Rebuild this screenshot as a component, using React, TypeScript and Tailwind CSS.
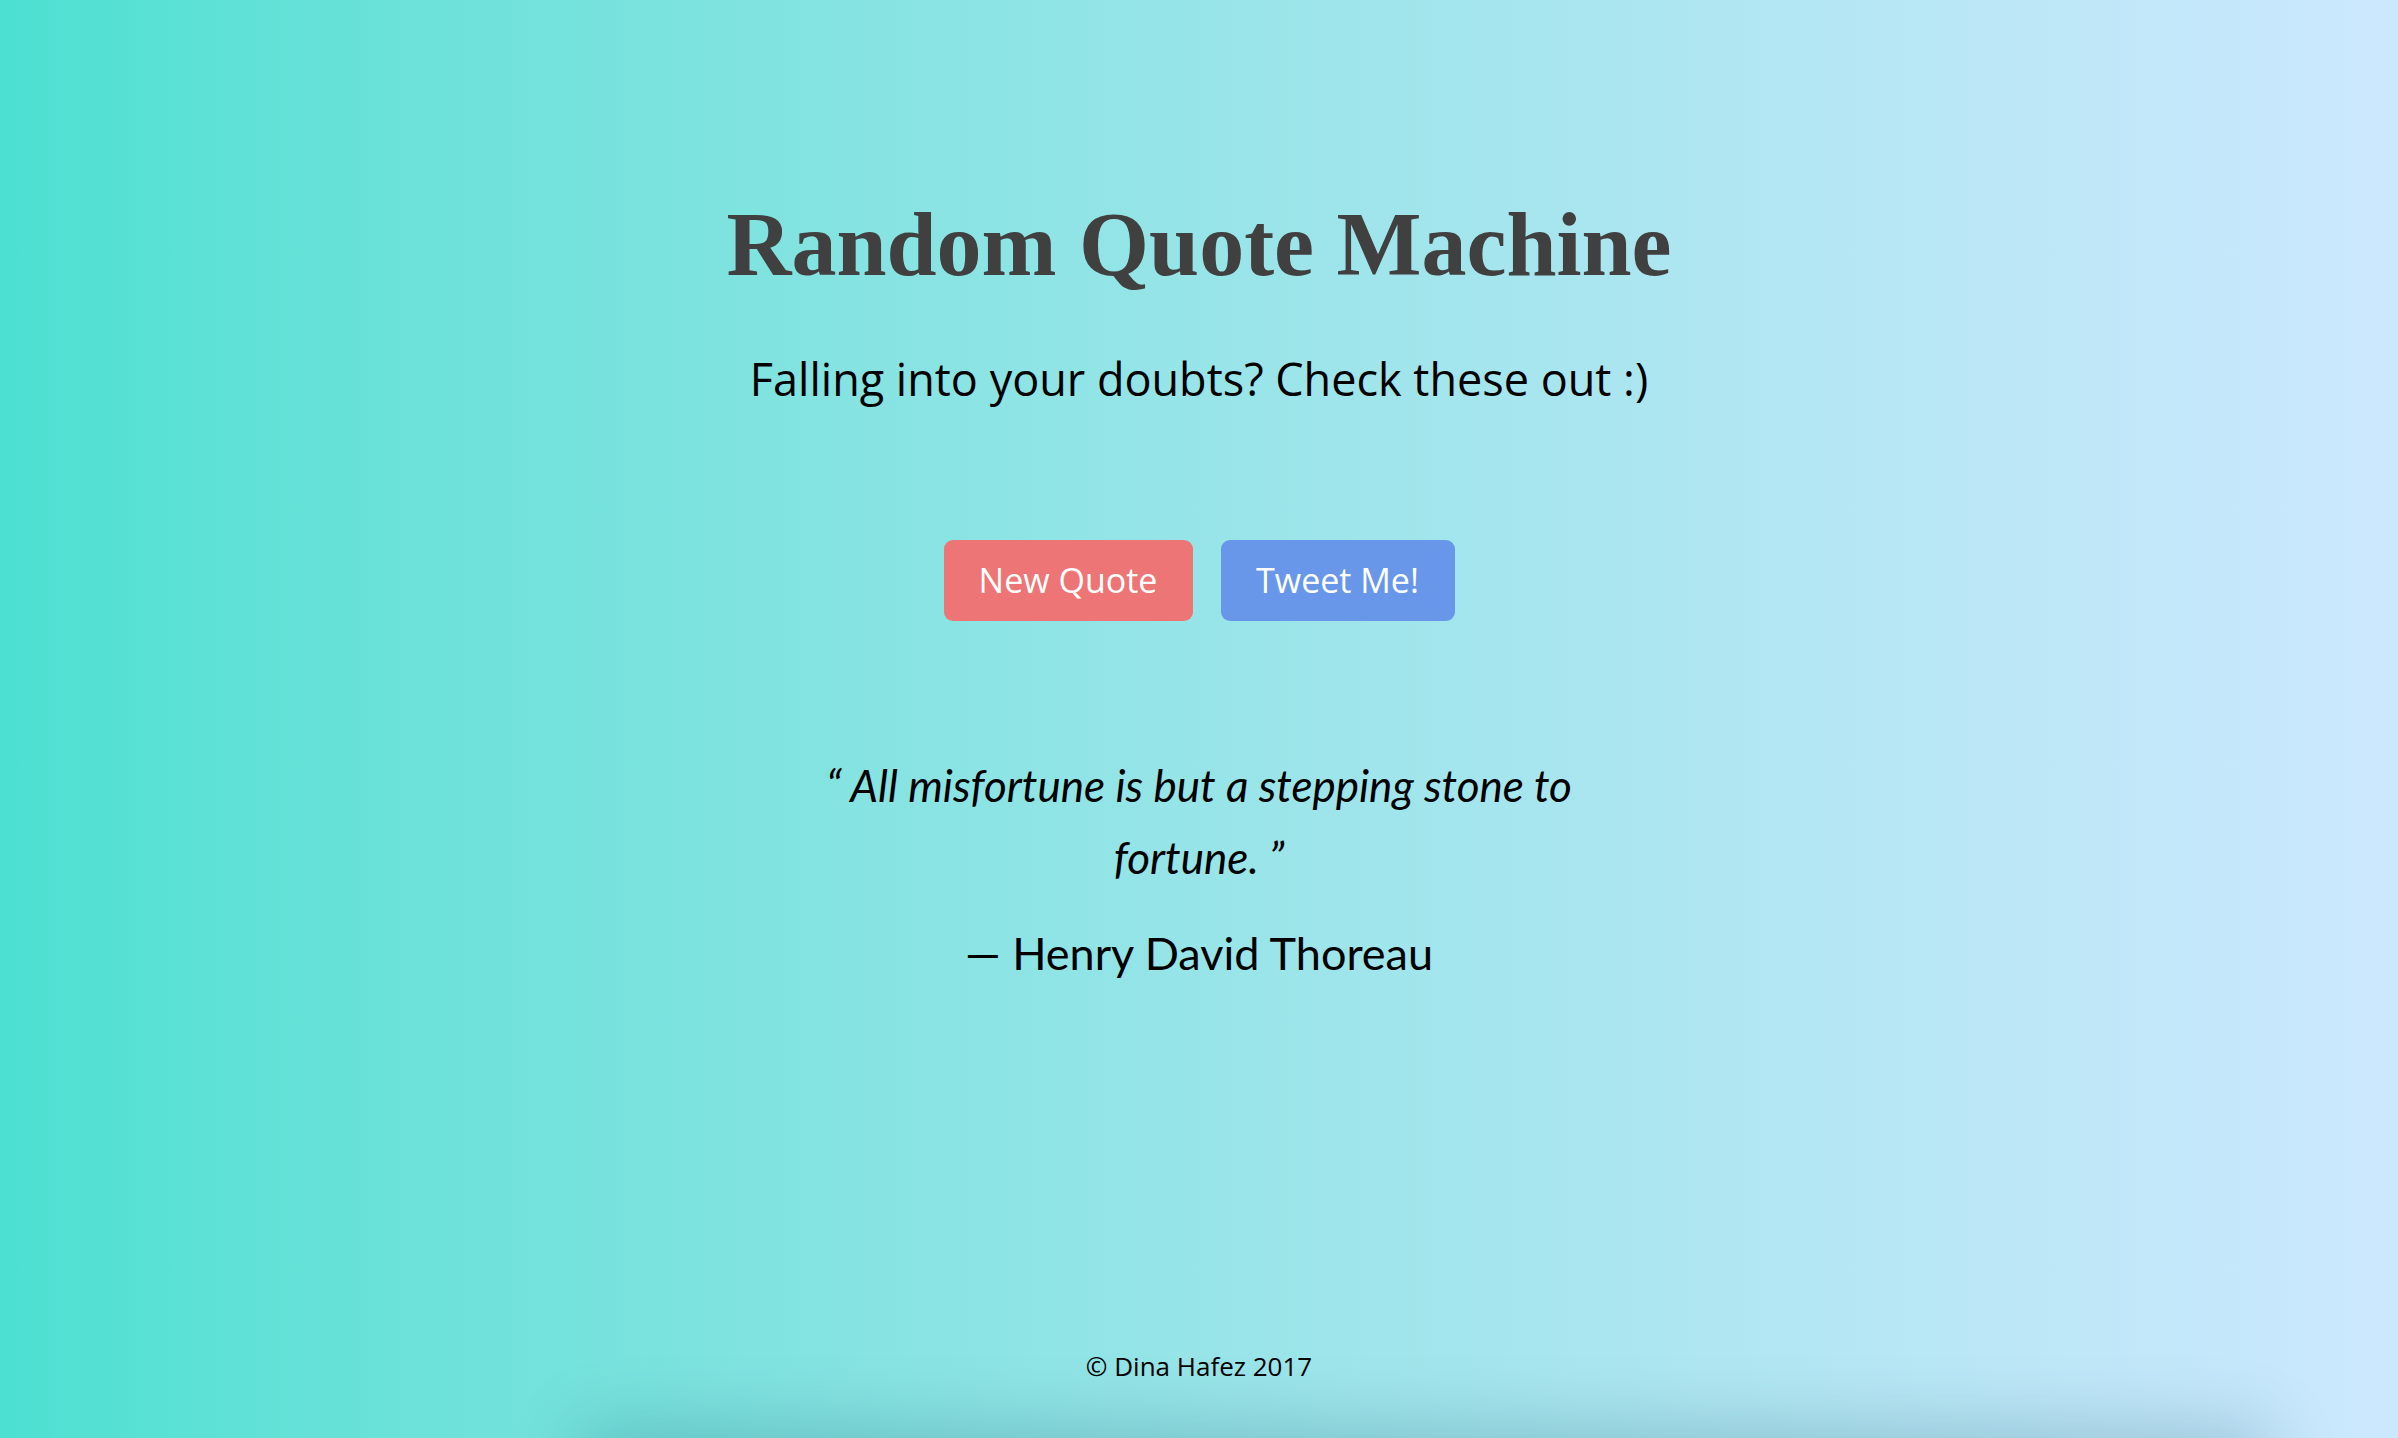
export default function App() {
  return (
    <div className="relative min-h-[1438px] h-[1438px] overflow-hidden bg-gradient-to-r from-[#4ce0d2] to-[#cce8fe] flex flex-col items-center">
      <h1
        className="mt-[195px] text-[90px] leading-[100px] font-bold text-[#404040]"
        style={{ fontFamily: '"Liberation Serif", serif' }}
      >
        Random Quote Machine
      </h1>

      <p
        className="mt-[59px] text-[45px] leading-[50px] text-black"
        style={{ fontFamily: '"Open Sans", sans-serif' }}
      >
        Falling into your doubts? Check these out :)
      </p>

      <div className="mt-[136px] flex gap-[28px]" style={{ fontFamily: '"Open Sans", sans-serif' }}>
        <button className="h-[81px] w-[249px] rounded-[9px] bg-[#ed7575] text-white text-[34px]">
          New Quote
        </button>
        <button className="h-[81px] w-[234px] rounded-[9px] bg-[#6897ea] text-white text-[34px]">
          Tweet Me!
        </button>
      </div>

      <div className="mt-[128px] w-[840px] text-center" style={{ fontFamily: 'Lato, sans-serif' }}>
        <p className="italic text-[44px] leading-[72px] text-black">
          “ All misfortune is but a stepping stone to fortune. ”
        </p>
        <p className="mt-[30px] text-[45px] leading-[60px] text-black">— Henry David Thoreau</p>
      </div>

      <footer
        className="mt-auto mb-[52px] text-[26px] leading-[40px] text-black"
        style={{ fontFamily: '"Open Sans", sans-serif' }}
      >
        © Dina Hafez 2017
      </footer>

      <div className="absolute left-[580px] right-[130px] top-full h-[200px] shadow-[0_-10px_70px_rgba(0,70,90,0.22)]" />
    </div>
  );
}
